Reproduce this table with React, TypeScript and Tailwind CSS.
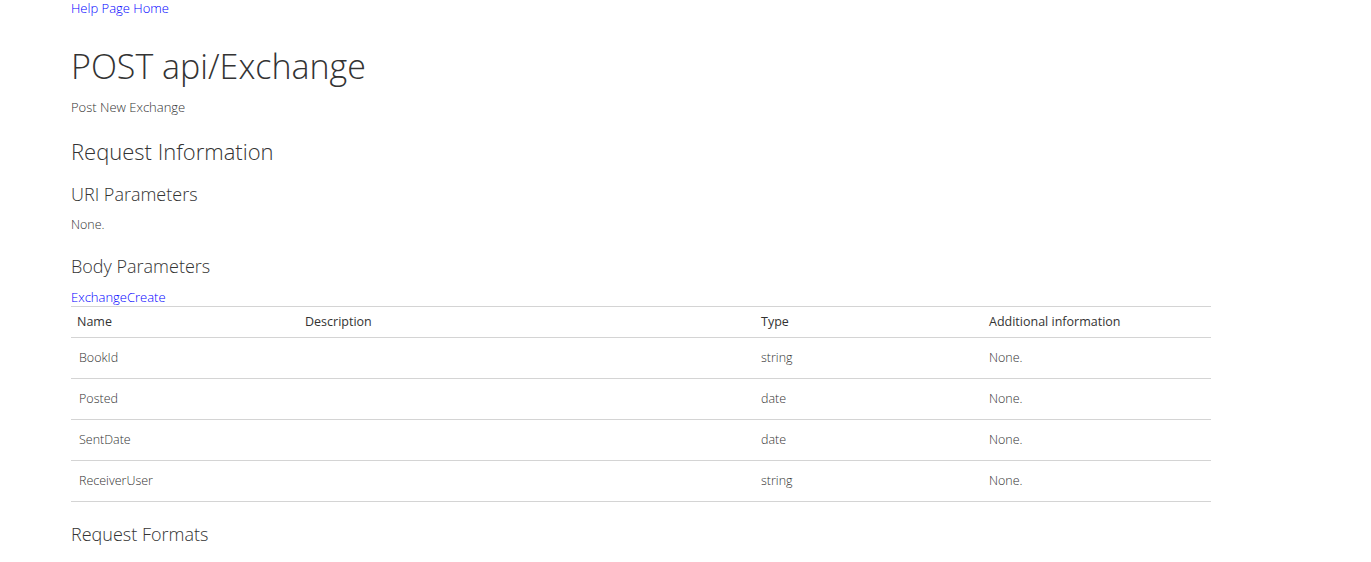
export default function App() {
  const rows = [
    { name: "BookId", type: "string" },
    { name: "Posted", type: "date" },
    { name: "SentDate", type: "date" },
    { name: "ReceiverUser", type: "string" },
  ]

  return (
    <div
      className="min-h-screen bg-white text-[#333] font-light"
      style={{ fontFamily: '"Open Sans", "Liberation Sans", sans-serif' }}
    >
      <div className="w-[1140px] ml-[71px]">
        <a href="#" className="block text-[13px] leading-[16px] text-[#0000ff]">
          Help Page Home
        </a>
        <h1 className="mt-[28px] text-[34px] leading-[44px] text-[#333]">POST api/Exchange</h1>
        <p className="mt-[11px] text-[13px] leading-[16px]">Post New Exchange</p>

        <h2 className="mt-[21px] text-[22px] leading-[30px]">Request Information</h2>
        <h3 className="mt-[16px] text-[18px] leading-[24px]">URI Parameters</h3>
        <p className="mt-[11px] text-[12.5px] leading-[16px]">None.</p>

        <h3 className="mt-[21px] text-[18px] leading-[24px]">Body Parameters</h3>
        <a href="#" className="block mt-[11px] text-[13px] leading-[16px] text-[#0000ff]">
          ExchangeCreate
        </a>

        <table className="w-full mt-[1px] border-t border-[#d4d4d4] text-[12.5px] table-fixed">
          <thead>
            <tr className="border-b border-[#d4d4d4] h-[31px]">
              <th className="w-[226px] text-left font-normal pl-[6px]">Name</th>
              <th className="w-[456px] text-left font-normal pl-[8px]">Description</th>
              <th className="w-[228px] text-left font-normal pl-[8px]">Type</th>
              <th className="text-left font-normal pl-[8px]">Additional information</th>
            </tr>
          </thead>
          <tbody>
            {rows.map((r) => (
              <tr key={r.name} className="border-b border-[#d4d4d4] h-[41px]">
                <td className="pl-[8px]">{r.name}</td>
                <td className="pl-[8px]"></td>
                <td className="pl-[8px]">{r.type}</td>
                <td className="pl-[8px]">None.</td>
              </tr>
            ))}
          </tbody>
        </table>

        <h3 className="mt-[20px] text-[18px] leading-[24px]">Request Formats</h3>
      </div>
    </div>
  )
}
